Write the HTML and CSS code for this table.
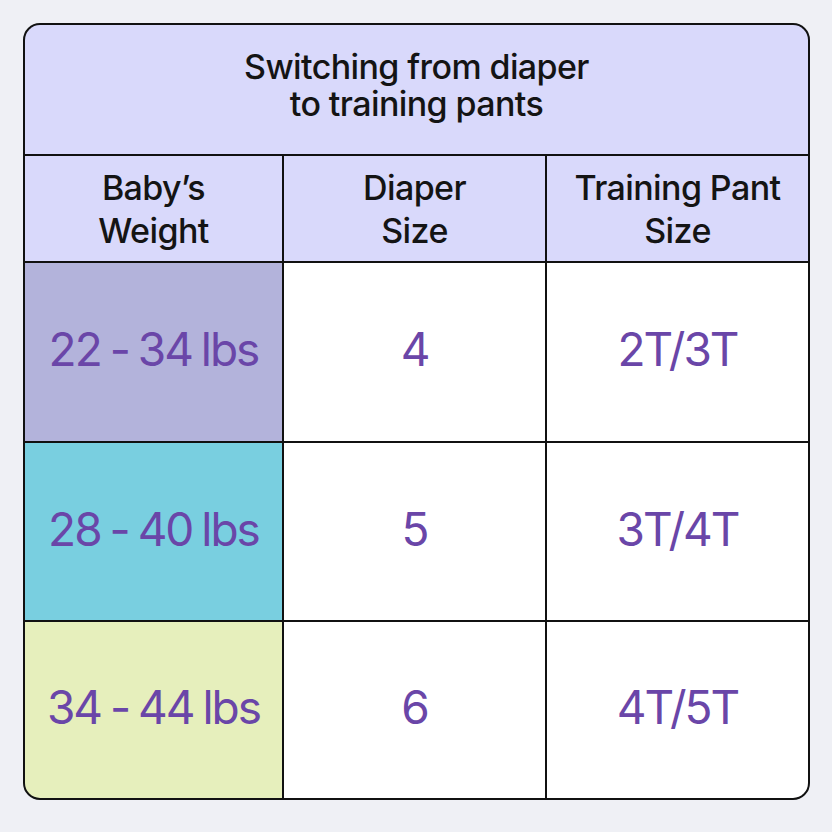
FILE: index.html
```html
<!DOCTYPE html>
<html>
<head>
<meta charset="utf-8">
<link rel="stylesheet" href="styles.css">
</head>
<body>
<div class="table">
  <div class="cell title">Switching from diaper<br>to training pants</div>
  <div class="cell head">Baby’s<br>Weight</div>
  <div class="cell head">Diaper<br>Size</div>
  <div class="cell head">Training Pant<br>Size</div>
  <div class="cell val w1">22 - 34 lbs</div>
  <div class="cell val">4</div>
  <div class="cell val">2T/3T</div>
  <div class="cell val w2">28 - 40 lbs</div>
  <div class="cell val">5</div>
  <div class="cell val">3T/4T</div>
  <div class="cell val w3">34 - 44 lbs</div>
  <div class="cell val">6</div>
  <div class="cell val">4T/5T</div>
</div>
</body>
</html>
```
FILE: styles.css
```css
html, body {
  margin: 0;
  padding: 0;
  background: #eff0f5;
}
body {
  padding: 23px;
  font-family: Inter, "Liberation Sans", sans-serif;
}
.table {
  width: 787px;
  height: 777px;
  box-sizing: border-box;
  border: 2px solid #111;
  border-radius: 17px;
  overflow: hidden;
  background: #111;
  display: grid;
  grid-template-columns: 257px 1fr 1fr;
  grid-template-rows: 129px 105px 178px 177px 176px;
  gap: 2px;
}
.cell {
  display: flex;
  align-items: center;
  justify-content: center;
  text-align: center;
  background: #fff;
}
.title {
  grid-column: 1 / 4;
  background: #d9d9fb;
  color: #141414;
  font-size: 34px;
  line-height: 37px;
  letter-spacing: -0.6px;
  font-weight: 500;
  padding-bottom: 10px;
}
.head {
  background: #d9d9fb;
  color: #141414;
  font-size: 34px;
  line-height: 43px;
  letter-spacing: -0.6px;
  font-weight: 500;
}
.val {
  color: #6a46a8;
  font-size: 46px;
  letter-spacing: -2px;
  word-spacing: -2px;
  font-weight: 400;
  padding-bottom: 6px;
}
.w1 { background: #b3b3db; }
.w2 { background: #79cfe0; }
.w3 { background: #e6efbc; }
```
